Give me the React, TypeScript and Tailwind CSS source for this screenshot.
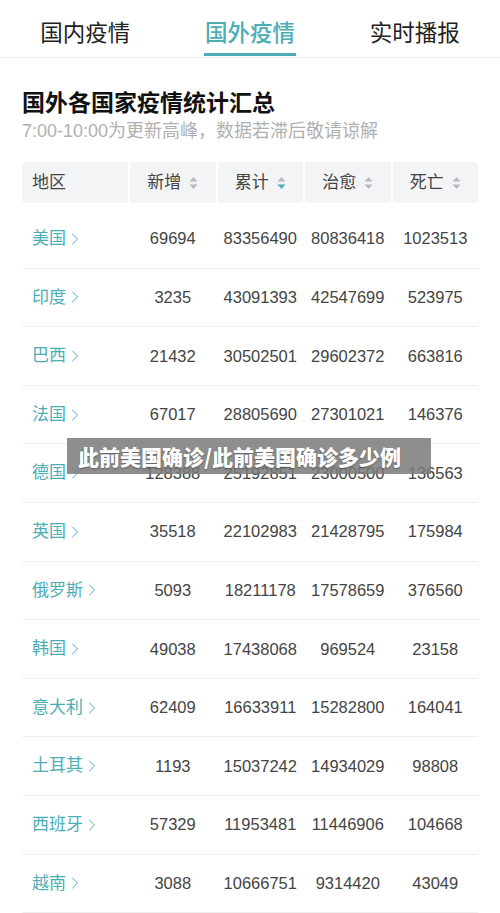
import { ChevronRight } from 'lucide-react';

const TABS = ['国内疫情', '国外疫情', '实时播报'];

const ROWS = [
  ['美国', '69694', '83356490', '80836418', '1023513'],
  ['印度', '3235', '43091393', '42547699', '523975'],
  ['巴西', '21432', '30502501', '29602372', '663816'],
  ['法国', '67017', '28805690', '27301021', '146376'],
  ['德国', '128388', '25192851', '23000500', '136563'],
  ['英国', '35518', '22102983', '21428795', '175984'],
  ['俄罗斯', '5093', '18211178', '17578659', '376560'],
  ['韩国', '49038', '17438068', '969524', '23158'],
  ['意大利', '62409', '16633911', '15282800', '164041'],
  ['土耳其', '1193', '15037242', '14934029', '98808'],
  ['西班牙', '57329', '11953481', '11446906', '104668'],
  ['越南', '3088', '10666751', '9314420', '43049'],
];

const HEADERS = [
  { label: '新增', active: false },
  { label: '累计', active: true },
  { label: '治愈', active: false },
  { label: '死亡', active: false },
];

function SortIcon({ active }: { active: boolean }) {
  return (
    <svg width="9" height="14" viewBox="0 0 9 14" className="ml-[8px]">
      <path d="M4.5 1 L8.5 5.5 L0.5 5.5 Z" fill="#b5b8bd" />
      <path d="M4.5 13 L8.5 8.5 L0.5 8.5 Z" fill={active ? '#4badb6' : '#b5b8bd'} />
    </svg>
  );
}

export default function App() {
  return (
    <div className="relative w-[500px] h-[913px] overflow-hidden bg-white font-['Liberation_Sans','Noto_Sans_CJK_SC',sans-serif]">
      {/* Tabs */}
      <div className="grid grid-cols-3 h-[58px] px-[3px] border-b border-[#eeeeee]">
        {TABS.map((t, i) => (
          <div key={t} className="flex flex-col items-center justify-end">
            <span
              className={`text-[22.5px] leading-none font-['Noto_Sans_CJK_SC',sans-serif] ${
                i === 1 ? 'text-[#4badb6] font-medium' : 'text-[#222222]'
              }`}
            >
              {t}
            </span>
            <div className={`mt-[11px] h-[3px] w-[92px] mb-[1px] ${i === 1 ? 'bg-[#4badb6]' : 'bg-transparent'}`} />
          </div>
        ))}
      </div>

      {/* Title */}
      <div className="px-[22px] pt-[28px]">
        <h1 className="text-[23px] leading-[30px] font-bold text-[#111111] font-['Noto_Sans_CJK_SC',sans-serif]">
          国外各国家疫情统计汇总
        </h1>
        <p className="mt-[5px] text-[18px] leading-[20px] text-[#b0b0b0]">
          7:00-10:00为更新高峰，数据若滞后敬请谅解
        </p>
      </div>

      {/* Table */}
      <div className="mx-[22px] mt-[21px]">
        <div className="grid grid-cols-[106px_1fr_1fr_1fr_1fr] gap-[2px] h-[41px] rounded-[4px] overflow-hidden">
          <div className="bg-[#f3f4f6] flex items-center pl-[10px] text-[17px] text-[#444444]">地区</div>
          {HEADERS.map(h => (
            <div key={h.label} className="bg-[#f3f4f6] flex items-center justify-center text-[17px] text-[#444444]">
              {h.label}
              <SortIcon active={h.active} />
            </div>
          ))}
        </div>
        <div className="mt-[7px]">
          {ROWS.map(r => (
            <div
              key={r[0]}
              className="grid grid-cols-[106px_1fr_1fr_1fr_1fr] gap-[2px] h-[58.6px] items-center border-b border-[#efefef]"
            >
              <div className="flex items-center pl-[10px] text-[17px] text-[#4badb6]">
                {r[0]}
                <ChevronRight size={20} strokeWidth={1.2} className="ml-[-1px]" />
              </div>
              {r.slice(1).map((v, i) => (
                <div key={i} className="text-center text-[16.5px] text-[#444444]">
                  {v}
                </div>
              ))}
            </div>
          ))}
        </div>
      </div>

      {/* Overlay banner */}
      <div className="absolute left-[67px] top-[438px] w-[364px] h-[36px] bg-[#7a7a7a]/85 flex items-center pl-[11px]">
        <span className="text-[21px] font-black text-white leading-none font-['Noto_Sans_CJK_SC',sans-serif] [text-shadow:0_1px_2px_rgba(0,0,0,0.35)]">
          此前美国确诊/此前美国确诊多少例
        </span>
      </div>
    </div>
  );
}
